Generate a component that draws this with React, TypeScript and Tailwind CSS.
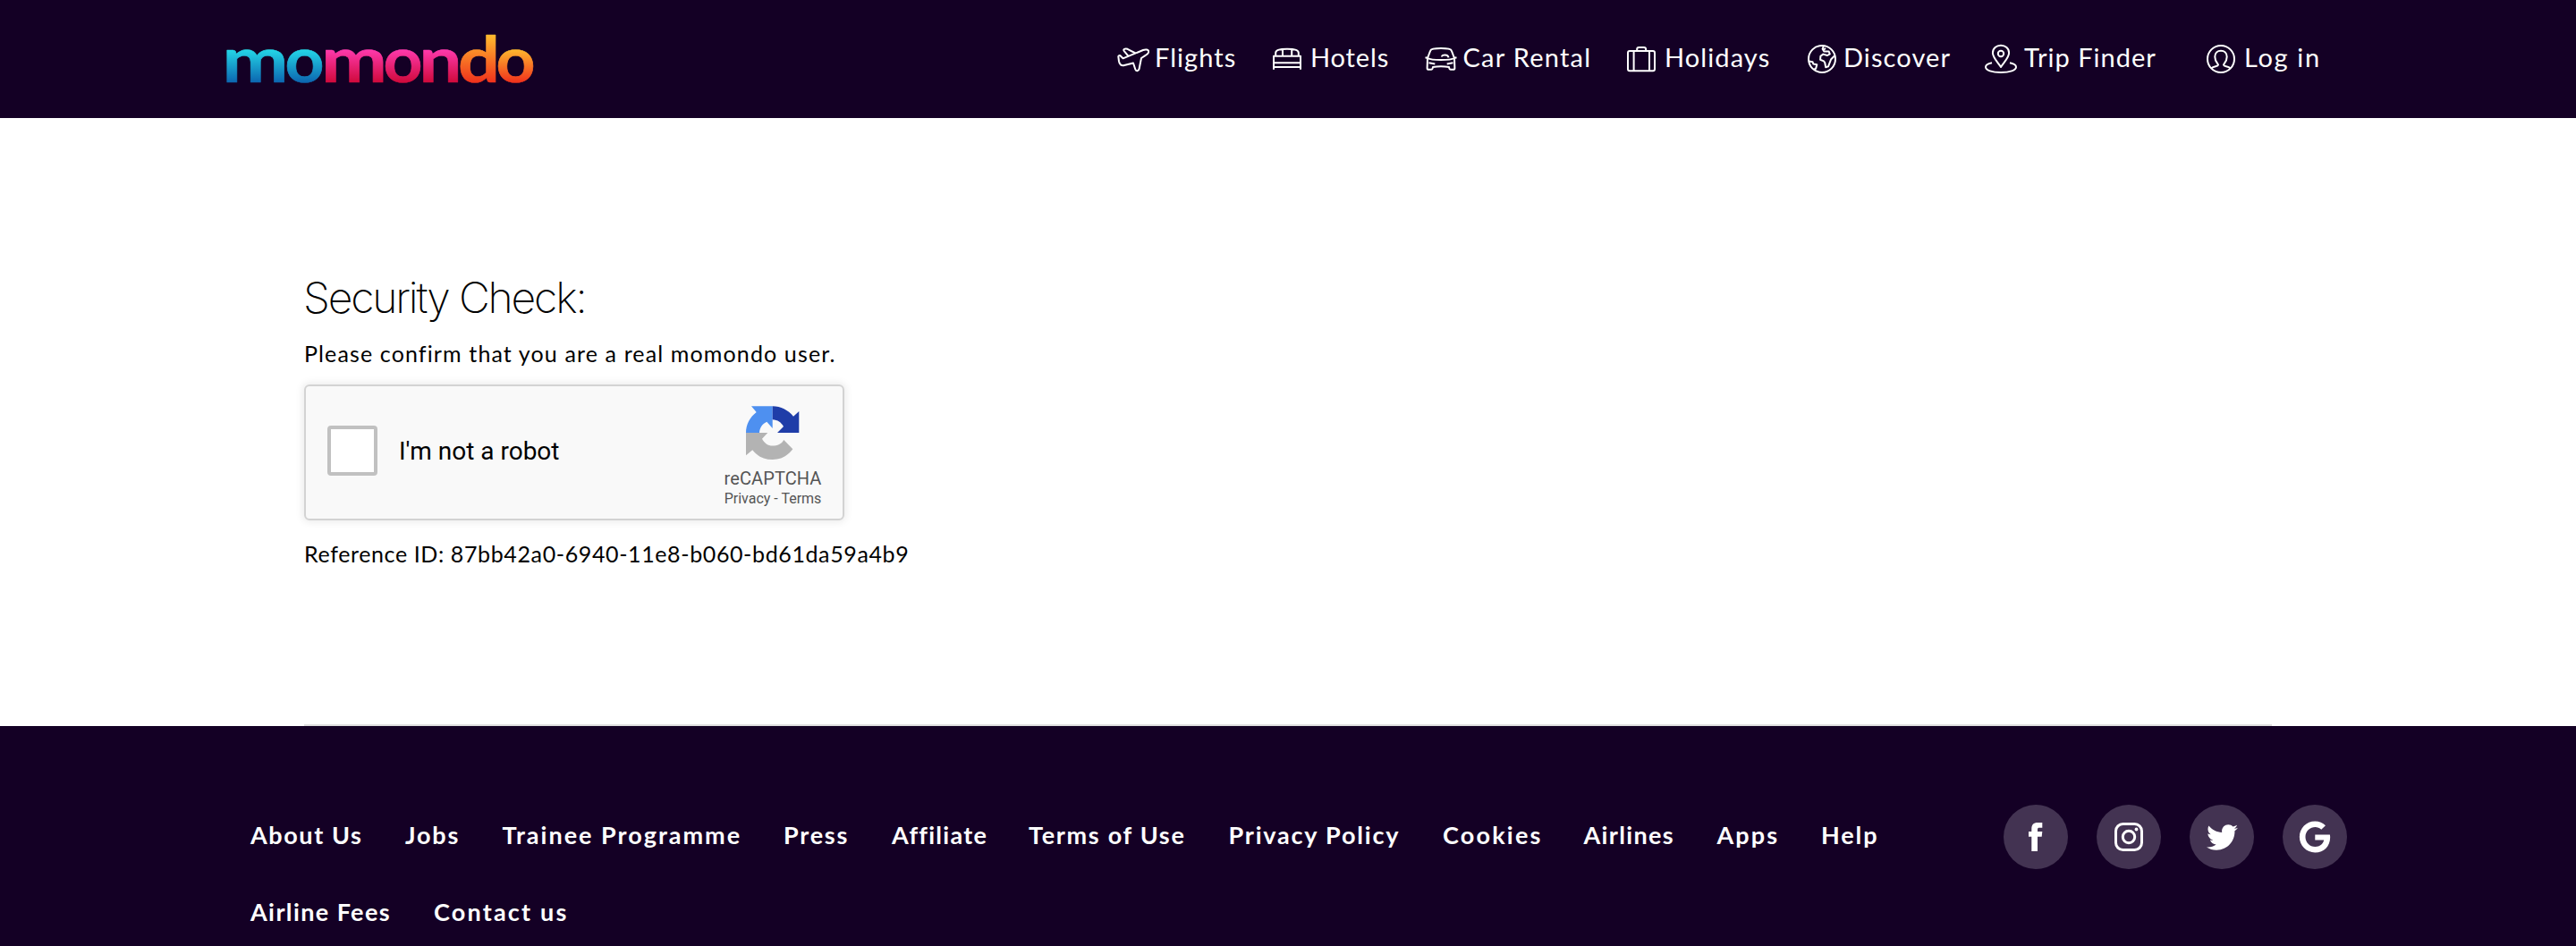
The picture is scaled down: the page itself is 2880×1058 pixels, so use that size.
import React from "react";
import { FaGoogle, FaTwitter } from "react-icons/fa";

type NavItem = { label: string; item: string; gap: string; tracking: string; icon: React.ReactNode };

const navItems: NavItem[] = [
  {
    label: "Flights",
    item: "w-[174px]",
    gap: "pl-[6px]",
    tracking: "tracking-[1.05px]",
    icon: (
      <>
        <path d="M1.4 16C1 14 3 13.3 4.2 15L6.5 17.3L29 8C32 6.8 35 7.5 35.2 9.5C35.4 11.5 33 13.3 31 14.4L27 17L24.6 29C24 31.8 21 32 20.3 29.5L18 22.5L8 25C4.5 25.8 2.6 24 2 20.5Z" />
        <path d="M20.5 11.5L11.5 6.8C9 5.8 6 7 7.8 9.2L12.6 14.8" />
      </>
    ),
  },
  {
    label: "Hotels",
    item: "w-[170px]",
    gap: "pl-[6px]",
    tracking: "tracking-[0.87px]",
    icon: (
      <>
        <path d="M1 29.7V14.8H31V29.7M1 22.3H31M1 27H31" />
        <path d="M3.2 14.5V11C3.2 8 8 6.8 16 6.8S28.8 8 28.8 11V14.5M11 7V14.5M21.2 7V14.5" />
      </>
    ),
  },
  {
    label: "Car Rental",
    item: "w-[226px]",
    gap: "pl-[6.5px]",
    tracking: "tracking-[1.25px]",
    icon: (
      <>
        <path d="M3 17L6.2 8.6C6.7 7 12 6 18 6S29.3 7 29.8 8.6L33 17M0.5 16.3L3 17C8 19.8 28 19.8 33 17L35.5 16.3" />
        <path d="M3 17L2.6 28.2C2.6 29.6 3.3 29.8 4.5 29.8H7C8.6 29.8 8.8 29 9 27C14 26.3 22 26.3 27 27C27.2 29 27.4 29.8 29 29.8H31.5C32.7 29.8 33.4 29.6 33.4 28.2L33 17" />
        <path d="M4.5 22.3L11.3 23.4M31.5 22.3L24.7 23.4M19 15.6C19 12.7 26 12.5 26.5 16.3" />
      </>
    ),
  },
  {
    label: "Holidays",
    item: "w-[202px]",
    gap: "pl-[6px]",
    tracking: "tracking-[1.1px]",
    icon: (
      <>
        <rect x="1" y="8.9" width="30" height="22.4" rx="2" />
        <path d="M7.6 9V31M25 9V31M11.2 9V6.8C11.2 5.4 12 5 13.4 4.9H18.8C20.3 5 21.1 5.4 21.1 6.8V9" />
      </>
    ),
  },
  {
    label: "Discover",
    item: "w-[198px]",
    gap: "pl-[4px]",
    tracking: "tracking-[1.1px]",
    icon: (
      <>
        <circle cx="16" cy="18" r="15" />
        <path d="M18 3L16.6 6.8L18.3 9.6L23.6 9.4L24.8 12.3L22 14L17.3 12.6L14.4 14.8L14.1 18.8L18 20.4L19.2 22L20.2 27.2L23 26.4L26.2 18.2L30.5 14M16.8 8.5L20 6" />
        <path d="M1.3 20.6L5.5 21.2L6.3 23.5L10.3 24.2L9.2 28.6L6.6 30" />
      </>
    ),
  },
  {
    label: "Trip Finder",
    item: "w-[248px]",
    gap: "pl-[8px]",
    tracking: "tracking-[1.02px]",
    icon: (
      <>
        <path d="M18 27C14.5 21.5 8.9 16.5 8.9 11.3C8.9 6 13 2.8 18 2.8S27.1 6 27.1 11.3C27.1 16.5 21.5 21.5 18 27Z" />
        <circle cx="18" cy="12" r="3.2" />
        <path d="M8 22.3C3.5 23.3 1 25 1 27C1 30.6 8.2 33 18 33S35 30.6 35 27C35 25 32.5 23.3 28 22.3" />
      </>
    ),
  },
  {
    label: "Log in",
    item: "w-[140px]",
    gap: "pl-[6px]",
    tracking: "tracking-[1.65px]",
    icon: (
      <>
        <circle cx="16" cy="18" r="15" />
        <path d="M5.5 28.2C8 25.6 12.6 26.6 13 24.6C13.2 23.2 9.3 21.5 9.3 15.6C9.3 11.3 12.3 8.8 16 8.8S22.7 11.3 22.7 15.6C22.7 21.5 18.8 23.2 19 24.6C19.4 26.6 24 25.6 26.5 28.2" />
      </>
    ),
  },
];

const footerLinks = [
  { label: "About Us", style: "w-[173px] tracking-[1.6px]" },
  { label: "Jobs", style: "w-[108.5px] tracking-[1.8px]" },
  { label: "Trainee Programme", style: "w-[314.5px] tracking-[2px]" },
  { label: "Press", style: "w-[121px] tracking-[1.75px]" },
  { label: "Affiliate", style: "w-[153px] tracking-[1.25px]" },
  { label: "Terms of Use", style: "w-[223.5px] tracking-[1.7px]" },
  { label: "Privacy Policy", style: "w-[239.5px] tracking-[1.8px]" },
  { label: "Cookies", style: "w-[157.5px] tracking-[2.2px]" },
  { label: "Airlines", style: "w-[149px] tracking-[1.35px]" },
  { label: "Apps", style: "w-[116.5px] tracking-[2.1px]" },
  { label: "Help", style: "w-[100px] tracking-[1.9px]" },
  { label: "Airline Fees", style: "w-[205px] tracking-[1.4px]" },
  { label: "Contact us", style: "w-[180px] tracking-[2.2px]" },
];

const logoLetters: [string, number, number, string][] = [
  ["m", -1.5, 74, "logo-blue"],
  ["o", 68.5, 44, "logo-blue"],
  ["m", 109, 74, "logo-pink"],
  ["o", 178.5, 44, "logo-pink"],
  ["n", 218.5, 48, "logo-pink"],
  ["d", 262, 47, "logo-orange-tall"],
  ["o", 304.5, 44, "logo-orange"],
];

function Logo() {
  return (
    <svg
      width="360"
      height="116"
      viewBox="0 0 360 116"
      role="img"
      aria-label="momondo"
      className="block overflow-visible"
    >
      <defs>
        <linearGradient id="logo-blue" gradientUnits="userSpaceOnUse" x1="0" y1="47" x2="0" y2="84">
          <stop offset="0" stopColor="#24d8e8" />
          <stop offset="1" stopColor="#0c66b0" />
        </linearGradient>
        <linearGradient id="logo-pink" gradientUnits="userSpaceOnUse" x1="0" y1="47" x2="0" y2="84">
          <stop offset="0" stopColor="#ff3aae" />
          <stop offset="1" stopColor="#d00a3c" />
        </linearGradient>
        <linearGradient id="logo-orange" gradientUnits="userSpaceOnUse" x1="0" y1="47" x2="0" y2="84">
          <stop offset="0" stopColor="#ffb92e" />
          <stop offset="1" stopColor="#f0321c" />
        </linearGradient>
        <linearGradient id="logo-orange-tall" gradientUnits="userSpaceOnUse" x1="0" y1="32" x2="0" y2="84">
          <stop offset="0" stopColor="#ffb92e" />
          <stop offset="1" stopColor="#f0321c" />
        </linearGradient>
      </defs>
      {logoLetters.map(([letter, x, length, fill], i) => (
        <text
          key={i}
          x={x}
          y="84"
          textLength={length}
          lengthAdjust="spacingAndGlyphs"
          fill={`url(#${fill})`}
          stroke={`url(#${fill})`}
          strokeWidth="0.6"
          strokeLinejoin="round"
          className="font-['Lato',sans-serif] text-[70px] font-bold"
        >
          {letter}
        </text>
      ))}
    </svg>
  );
}

function Header() {
  return (
    <header className="flex h-[132px] items-center bg-[#140025] pl-[250px] text-white">
      <div className="w-[999px]">
        <Logo />
      </div>
      <nav className="flex items-center">
        {navItems.map((n) => (
          <a key={n.label} className={`flex shrink-0 items-center ${n.item}`}>
            <svg
              width="36"
              height="36"
              viewBox="0 0 36 36"
              fill="none"
              stroke="currentColor"
              strokeWidth="2"
              strokeLinejoin="round"
              className="shrink-0"
            >
              {n.icon}
            </svg>
            <span className={`pb-[5px] text-[29px] leading-9 whitespace-nowrap ${n.gap} ${n.tracking}`}>
              {n.label}
            </span>
          </a>
        ))}
      </nav>
    </header>
  );
}

function Captcha() {
  return (
    <div className="mt-[17px] flex h-[152px] w-[604px] rounded-[6px] border-2 border-[#d3d3d3] bg-[#f9f9f9] font-['Roboto',sans-serif] shadow-[0_0_8px_2px_rgba(0,0,0,0.08)]">
      <div className="flex flex-1 items-center pb-1 pl-6">
        <div className="size-14 rounded-[4px] border-4 border-[#c1c1c1] bg-white" />
        <span className="pt-px pl-[24px] text-[28px] leading-9">I'm not a robot</span>
      </div>
      <div className="flex w-[156px] flex-col items-center pt-[22px] text-[#555]">
        <svg width="60" height="60" viewBox="0 0 60 60">
          <path fill="#4e90f0" d="M6 .3H29.7V25L23.3 17.7C18.5 20 15.3 24 15 30H0C0 20.5 4.5 12.5 11.7 7Z" />
          <path fill="#1f3da8" d="M29.7 .3C39 .3 47 4.5 53 11.7L59.3 6V30H35L42 23C39.5 18.5 35.5 15.5 29.7 15.3Z" />
          <path fill="#b3b3b3" d="M0 30H24.3L18 36.7C20.5 41.5 24.5 44.6 29.7 44.6C35 44.6 40 42.5 42.3 38L52.3 48.3C47 55.5 39.5 60 29.7 60C20 60 13 56.5 7.3 49.3L0 55.3Z" />
        </svg>
        <div className="mt-[9px] text-[20px] leading-6 tracking-[0.1px]">reCAPTCHA</div>
        <div className="mt-px text-[16px] leading-5">Privacy - Terms</div>
      </div>
    </div>
  );
}

function Social({ children }: { children: React.ReactNode }) {
  return <a className="flex size-[72px] items-center justify-center rounded-full bg-[#433352]">{children}</a>;
}

function Footer() {
  return (
    <footer className="flex h-[246px] bg-[#140025] text-white">
      <nav className="ml-[280px] flex w-[1872px] flex-wrap content-start pt-[79px]">
        {footerLinks.map((l) => (
          <a key={l.label} className={`h-[86px] text-[27px] leading-[86px] font-bold whitespace-nowrap ${l.style}`}>
            {l.label}
          </a>
        ))}
      </nav>
      <div className="ml-[88px] flex gap-8 pt-[88px]">
        <Social>
          <svg width="16" height="32" viewBox="0 0 16 32" fill="currentColor">
            <path d="M3.3 32V15.7H0V10H3.3V7C3.3 2.5 5.5 0 10 0H15.3V5.7H12C10.5 5.7 10 6.3 10 8V10H15.3L14.7 15.7H10V32Z" />
          </svg>
        </Social>
        <Social>
          <svg width="32" height="32" viewBox="0 0 32 32" fill="none" stroke="currentColor" strokeWidth="3">
            <rect x="1.5" y="1.5" width="29" height="29" rx="8" />
            <circle cx="16" cy="16" r="6.7" />
            <circle cx="24.5" cy="7.5" r="1.9" fill="currentColor" stroke="none" />
          </svg>
        </Social>
        <Social>
          <FaTwitter size={35} />
        </Social>
        <Social>
          <FaGoogle size={36} />
        </Social>
      </div>
    </footer>
  );
}

export default function App() {
  return (
    <div className="h-[1058px] w-[2880px] overflow-hidden bg-white font-['Lato',sans-serif] text-black">
      <Header />
      <main className="flex h-[678px] flex-col items-start pt-[171px] pl-[340px]">
        <h1 className="-ml-px font-['Inter',sans-serif] text-[48px] leading-[60px] font-[150] tracking-[-2.15px]">
          Security Check:
        </h1>
        <p className="mt-[14px] text-[25px] leading-9 tracking-[1.13px]">
          Please confirm that you are a real momondo user.
        </p>
        <Captcha />
        <p className="mt-[19px] text-[25px] leading-9 tracking-[0.62px]">
          Reference ID: 87bb42a0-6940-11e8-b060-bd61da59a4b9
        </p>
      </main>
      <div className="ml-[340px] h-[2px] w-[2200px] bg-[#e0e0e0]" />
      <Footer />
    </div>
  );
}
